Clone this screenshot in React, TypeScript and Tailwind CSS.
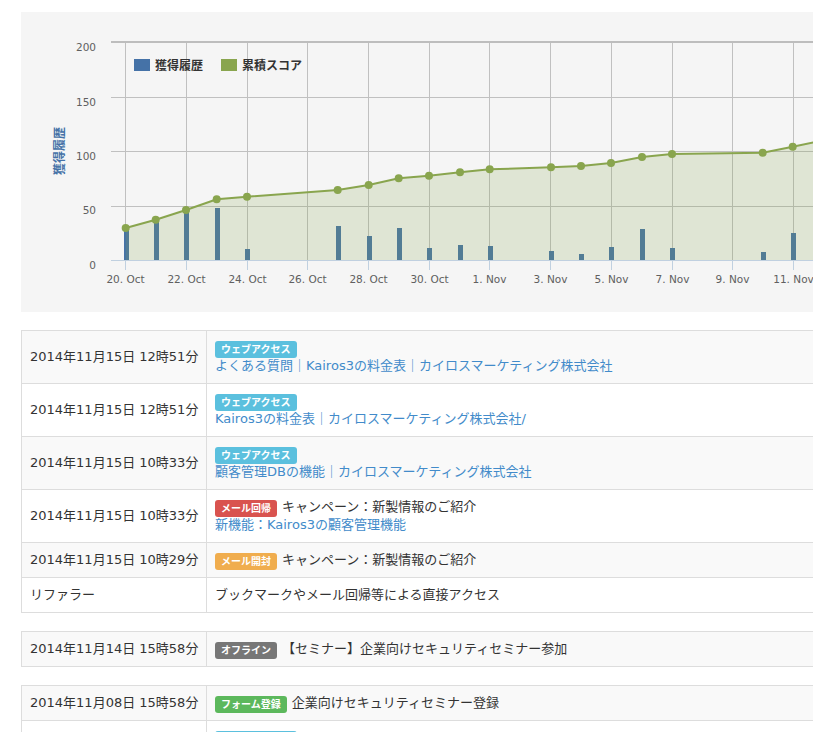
import React from 'react';

const gridY = [97, 151, 206];
const gridX = [125, 186, 247, 307, 368, 429, 489, 550, 611, 672, 732, 793];
const ticks = [
  '20. Oct', '22. Oct', '24. Oct', '26. Oct', '28. Oct', '30. Oct',
  '1. Nov', '3. Nov', '5. Nov', '7. Nov', '9. Nov', '11. Nov',
];
const yLabels: [string, number][] = [['200', 50], ['150', 105], ['100', 159], ['50', 213], ['0', 268]];

// [left, top] of each bar, all of them stand on the axis at y=260
const bars = [
  [124, 230], [154, 222], [184, 212], [215, 208], [245, 249], [336, 226], [367, 236], [397, 228], [427, 248],
  [458, 245], [488, 246], [549, 251], [579, 254], [609, 247], [640, 229], [670, 248], [761, 252], [791, 233],
];
const points = [
  [125.7, 228], [155.7, 219.7], [186, 210], [216.7, 199.3], [247, 196.7], [337.7, 190], [368.7, 185], [398.7, 178.3],
  [429, 175.7], [460, 172.3], [489.7, 169.3], [551, 167.3], [581, 166], [611, 163], [642, 157], [672, 154],
  [762.7, 152.7], [792.7, 146.7], [823, 140.5],
];
const linePath = points.map((p) => p.join(',')).join(' ');
const areaPath = `125.7,260 ${linePath} 823,260`;

function Chart() {
  // the svg starts at x=21, y=12 of the page
  return (
    <div className="h-[300px] w-[900px] shrink-0 bg-[#f5f5f5]">
      <svg width="900" height="300" viewBox="21 12 900 300" style={{ fontFamily: '"DejaVu Sans", "Noto Sans CJK JP", sans-serif' }}>
        {gridX.map((x) => (
          <line key={x} x1={x + 0.5} x2={x + 0.5} y1="42" y2="260" stroke="#c0c0c0" />
        ))}
        {gridY.map((y) => (
          <line key={y} x1="111" x2="921" y1={y + 0.5} y2={y + 0.5} stroke="#c0c0c0" />
        ))}
        <line x1="111" x2="921" y1="42" y2="42" stroke="#bdbdbd" strokeWidth="2" />
        {gridX.map((x) => (
          <line key={x} x1={x + 0.5} x2={x + 0.5} y1="260" y2="270" stroke="#c0d0e0" />
        ))}
        {bars.map(([x, top]) => (
          <rect key={x} x={x} y={top} width="5" height={260 - top} fill="#4572a7" />
        ))}
        <polygon points={areaPath} fill="#89a54e" fillOpacity="0.2" />
        <line x1="111" x2="921" y1="260.5" y2="260.5" stroke="#c0d0e0" />
        <polyline points={linePath} fill="none" stroke="#89a54e" strokeWidth="2" />
        {points.map(([x, y]) => (
          <circle key={x} cx={x} cy={y} r="4" fill="#89a54e" />
        ))}
        {yLabels.map(([t, y]) => (
          <text key={t} x="96" y={y + 1} textAnchor="end" fontSize="10.5" fill="#606060">{t}</text>
        ))}
        {ticks.map((t, i) => (
          <text key={t} x={gridX[i] + 0.5} y="283" textAnchor="middle" fontSize="10.5" fill="#606060">{t}</text>
        ))}
        <text transform="translate(64 151) rotate(-90)" textAnchor="middle" fontSize="12" fontWeight="700" fill="#4572a7">獲得履歴</text>
        <rect x="134" y="59" width="16" height="12" fill="#4572a7" />
        <text x="155" y="70" fontSize="12" fontWeight="700" fill="#333">獲得履歴</text>
        <rect x="221" y="59" width="16" height="12" fill="#89a54e" />
        <text x="242" y="70" fontSize="12" fontWeight="700" fill="#333">累積スコア</text>
      </svg>
    </div>
  );
}

// label plus what follows it on the same line
function Line({ label, color, children }: { label: string; color: string; children?: React.ReactNode }) {
  return (
    <div className="flex min-h-[18px] items-start gap-[5px]">
      <span className={`${color} mt-[2px] -mb-[2px] h-[17px] rounded-[3px] px-[6px] text-[10px] leading-[17px] font-bold text-white`}>
        {label}
      </span>
      {children && <span>{children}</span>}
    </div>
  );
}

function Link({ children }: { children: React.ReactNode }) {
  return <a className="block text-[#428bca]">{children}</a>;
}

function Row({ date, striped, children }: { date?: string; striped?: boolean; children: React.ReactNode }) {
  return (
    <tr className={striped ? 'bg-[#f9f9f9]' : 'bg-white'}>
      <td className="border border-[#ddd] p-2 whitespace-nowrap">{date}</td>
      <td className="border border-[#ddd] p-2">{children}</td>
    </tr>
  );
}

function Table({ children }: { children: React.ReactNode }) {
  return (
    <table className="w-[900px] shrink-0 table-fixed border-collapse text-[13px] leading-[18px] text-[#333]">
      <colgroup>
        <col className="w-[185px]" />
        <col />
      </colgroup>
      <tbody>{children}</tbody>
    </table>
  );
}

const info = 'bg-[#5bc0de]';

export default function App() {
  return (
    <div
      className="flex h-[732px] w-[813px] flex-col gap-[18px] overflow-hidden bg-white pt-3 pl-[21px]"
      style={{ fontFamily: '"DejaVu Sans", "Noto Sans CJK JP", sans-serif' }}
    >
      <Chart />
      <Table>
        <Row date="2014年11月15日 12時51分" striped>
          <Line label="ウェブアクセス" color={info} />
          <Link>よくある質問｜Kairos3の料金表｜カイロスマーケティング株式会社</Link>
        </Row>
        <Row date="2014年11月15日 12時51分">
          <Line label="ウェブアクセス" color={info} />
          <Link>Kairos3の料金表｜カイロスマーケティング株式会社/</Link>
        </Row>
        <Row date="2014年11月15日 10時33分" striped>
          <Line label="ウェブアクセス" color={info} />
          <Link>顧客管理DBの機能｜カイロスマーケティング株式会社</Link>
        </Row>
        <Row date="2014年11月15日 10時33分">
          <Line label="メール回帰" color="bg-[#d9534f]">キャンペーン：新製情報のご紹介</Line>
          <Link>新機能：Kairos3の顧客管理機能</Link>
        </Row>
        <Row date="2014年11月15日 10時29分" striped>
          <Line label="メール開封" color="bg-[#f0ad4e]">キャンペーン：新製情報のご紹介</Line>
        </Row>
        <Row date="リファラー">ブックマークやメール回帰等による直接アクセス</Row>
      </Table>
      <Table>
        <Row date="2014年11月14日 15時58分" striped>
          <Line label="オフライン" color="bg-[#777]">【セミナー】企業向けセキュリティセミナー参加</Line>
        </Row>
      </Table>
      <Table>
        <Row date="2014年11月08日 15時58分" striped>
          <Line label="フォーム登録" color="bg-[#5cb85c]">企業向けセキュリティセミナー登録</Line>
        </Row>
        <Row>
          <Line label="ウェブアクセス" color={info} />
        </Row>
      </Table>
    </div>
  );
}
